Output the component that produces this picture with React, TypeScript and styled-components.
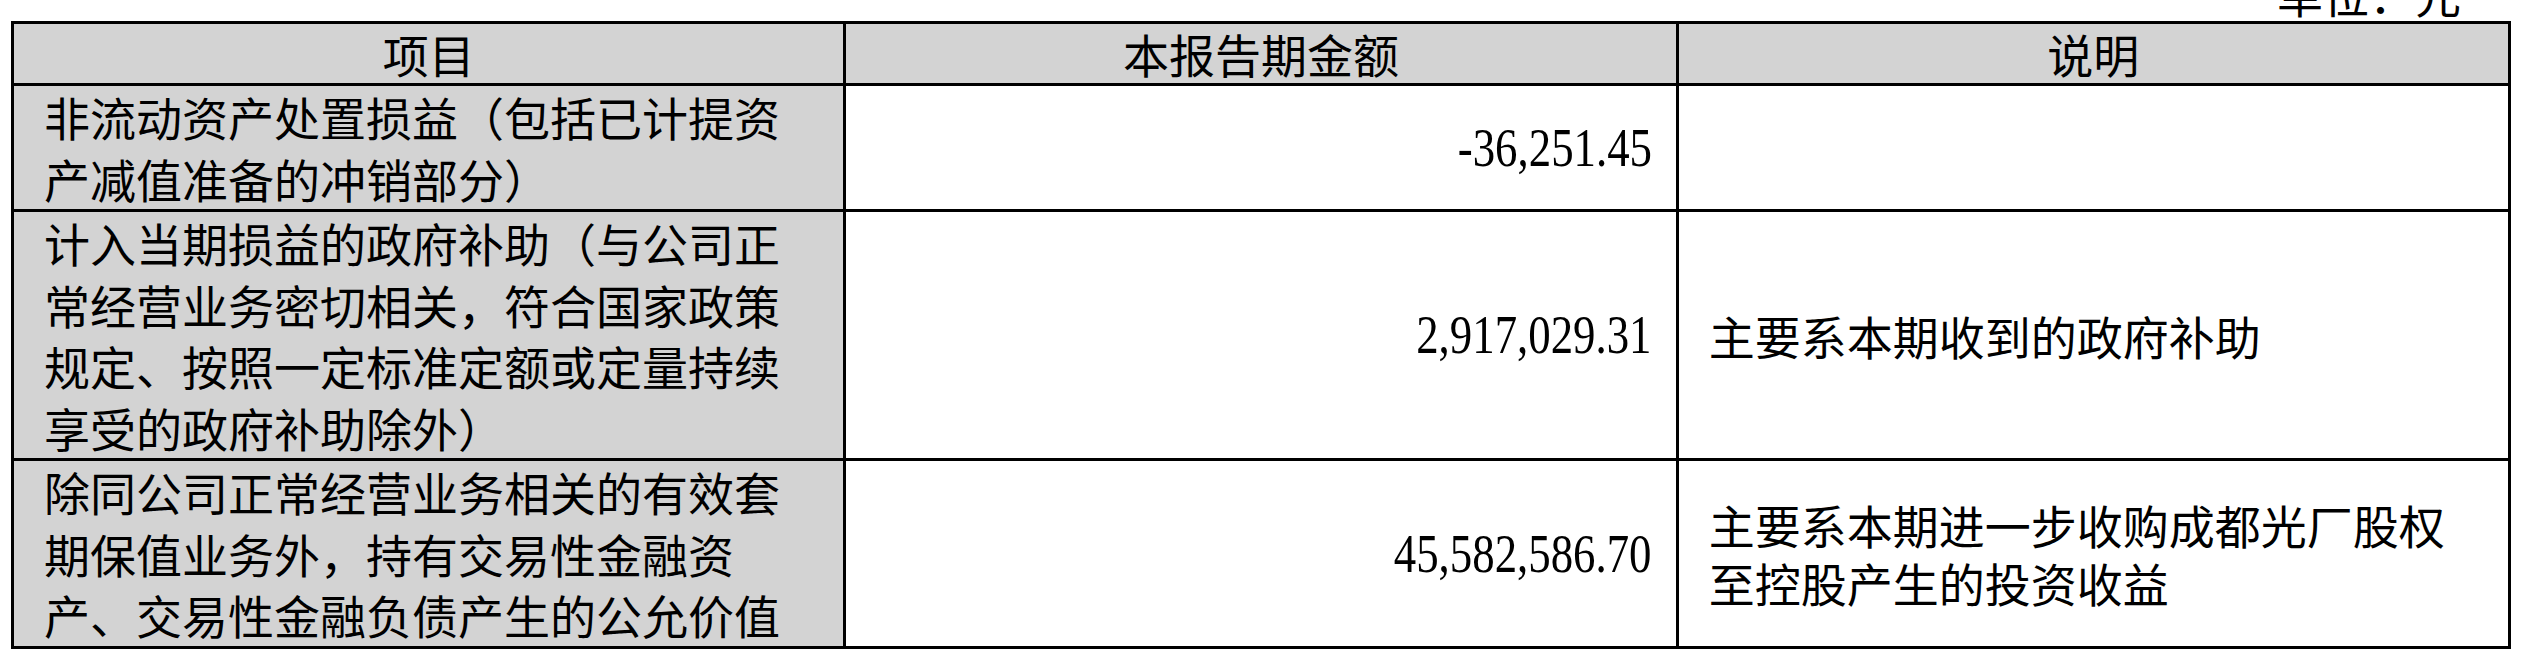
import React, { FC } from "react";
import styled, { createGlobalStyle } from "styled-components";

interface Row {
  item: string;
  amount: string;
  note?: string;
}

const rows: Row[] = [
  {
    item: "非流动资产处置损益（包括已计提资产减值准备的冲销部分）",
    amount: "-36,251.45",
  },
  {
    item: "计入当期损益的政府补助（与公司正常经营业务密切相关，符合国家政策规定、按照一定标准定额或定量持续享受的政府补助除外）",
    amount: "2,917,029.31",
    note: "主要系本期收到的政府补助",
  },
  {
    item: "除同公司正常经营业务相关的有效套期保值业务外，持有交易性金融资产、交易性金融负债产生的公允价值",
    amount: "45,582,586.70",
    note: "主要系本期进一步收购成都光厂股权至控股产生的投资收益",
  },
];

const GlobalStyle = createGlobalStyle`
  html, body {
    margin: 0;
    padding: 0;
    background: #fff;
  }
  body {
    font-family: "Noto Sans CJK SC", "Noto Sans", sans-serif;
    color: #000;
  }
`;

const App: FC = () => {
  return (
    <Page>
      <GlobalStyle />
      <Caption>
        <CaptionText>单位：元</CaptionText>
      </Caption>
      <Table>
        <colgroup>
          <col />
          <col />
          <col />
        </colgroup>
        <thead>
          <tr>
            <HeadCell>项目</HeadCell>
            <HeadCell>本报告期金额</HeadCell>
            <HeadCell>说明</HeadCell>
          </tr>
        </thead>
        <tbody>
          {rows.map((row, index) => (
            <tr key={index}>
              <LabelCell>{row.item}</LabelCell>
              <AmountCell>
                <Amount>{row.amount}</Amount>
              </AmountCell>
              <NoteCell>{row.note}</NoteCell>
            </tr>
          ))}
        </tbody>
      </Table>
    </Page>
  );
};

export default App;

const Page = styled.div`
  width: 2530px;
  height: 668px;
  overflow: hidden;
  padding-left: 11px;
  box-sizing: border-box;
`;

const Caption = styled.div`
  width: 2500px;
  height: 21px;
  display: flex;
  justify-content: flex-end;
  align-items: flex-end;
  padding: 0 50px 5px 0;
  box-sizing: border-box;
`;

const CaptionText = styled.span`
  font-size: 46px;
  line-height: 1;
  white-space: nowrap;
`;

const Table = styled.table`
  width: 2500px;
  table-layout: fixed;
  border-collapse: collapse;
  border: 3px solid #000;

  col {
    width: 33.333%;
  }
`;

const Cell = styled.td`
  border: 3px solid #000;
  font-size: 46px;
  line-height: 61.5px;
  vertical-align: middle;
  padding: 0 30px;
  color: #000;
`;

const HeadCell = styled(Cell).attrs({ as: "th" })`
  background: #d3d3d3;
  font-weight: normal;
  text-align: center;
  line-height: 59px;
`;

const LabelCell = styled(Cell)`
  background: #d3d3d3;
  text-align: left;
`;

const AmountCell = styled(Cell)`
  background: #fff;
  text-align: right;
  padding-right: 24px;
`;

const Amount = styled.span`
  display: inline-block;
  font-family: "Liberation Serif", "Times New Roman", serif;
  font-size: 54px;
  transform: scaleX(0.83);
  transform-origin: right center;
  white-space: nowrap;
`;

const NoteCell = styled(Cell)`
  background: #fff;
  text-align: left;
  line-height: 58px;
`;
